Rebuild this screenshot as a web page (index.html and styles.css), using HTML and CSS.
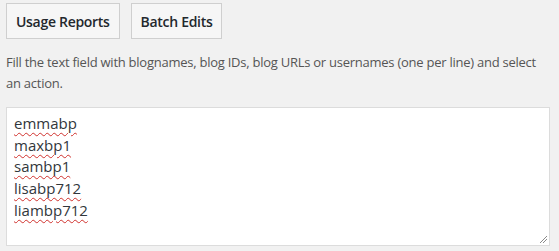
FILE: index.html
```html
<!DOCTYPE html>
<html lang="en">
<head>
<meta charset="utf-8">
<title>Batch Edits</title>
<link rel="stylesheet" href="styles.css">
</head>
<body>
<div class="page">
  <div class="tabs">
    <button class="btn" type="button">Usage Reports</button>
    <button class="btn" type="button">Batch Edits</button>
  </div>
  <p class="desc">Fill the text field with blognames, blog IDs, blog URLs or usernames (one per line) and select an action.</p>
  <div class="field" role="textbox" aria-multiline="true">
    <div class="line"><span class="miss">emmabp</span></div>
    <div class="line"><span class="miss">maxbp1</span></div>
    <div class="line"><span class="miss">sambp1</span></div>
    <div class="line"><span class="miss">lisabp712</span></div>
    <div class="line"><span class="miss">liambp712</span></div>
    <svg class="grip" width="9" height="9" viewBox="0 0 9 9"><path d="M8 1 L1 8 M8 4 L4 8" stroke="#8a8a8a" stroke-width="1" fill="none"/></svg>
  </div>
</div>
</body>
</html>
```
FILE: styles.css
```css
html, body {
  margin: 0;
  padding: 0;
  background: #f1f1f1;
}
.page {
  padding: 3px 10px 0 6px;
  font-family: "Open Sans", "Noto Sans", sans-serif;
}
.tabs {
  display: flex;
  gap: 11px;
}
.btn {
  height: 36px;
  padding: 0 9px;
  border: 1px solid #cfcfcf;
  background: #f6f6f6;
  font-family: "Open Sans", sans-serif;
  font-weight: 600;
  font-size: 14px;
  letter-spacing: -0.3px;
  color: #23282d;
  border-radius: 0;
}
.desc {
  margin: 13px 0 0;
  font-size: 13px;
  letter-spacing: -0.25px;
  line-height: 21px;
  color: #555;
  width: 538px;
}
.field {
  position: relative;
  box-sizing: border-box;
  margin-top: 13px;
  width: 544px;
  height: 139px;
  border: 1px solid #dcdcdc;
  background: #fff;
  padding: 5px 7px;
  font-size: 15px;
  line-height: 21.7px;
  color: #32373c;
}
.miss {
  text-decoration: underline wavy #d0312d;
  text-decoration-thickness: 1px;
  text-underline-offset: 3px;
}
.grip {
  position: absolute;
  right: 1px;
  bottom: 1px;
}
```
